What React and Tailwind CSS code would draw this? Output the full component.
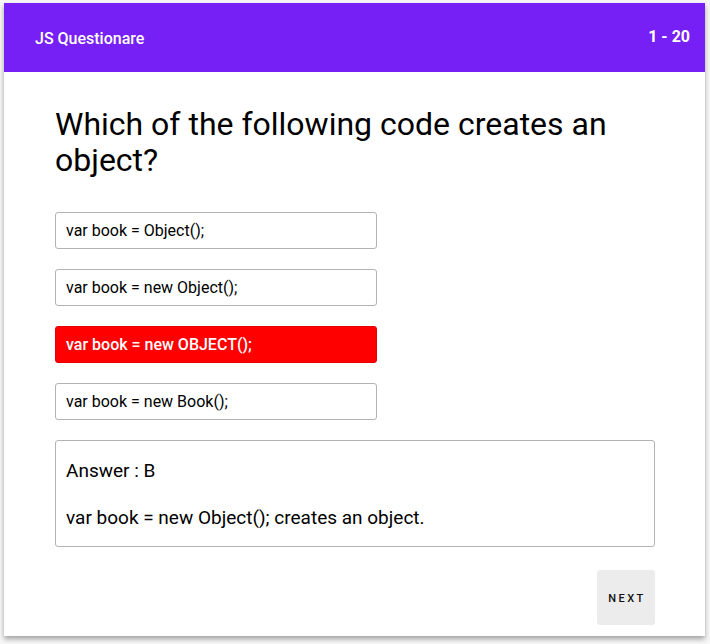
export default function App() {
  const options = [
    { text: "var book = Object();", wrong: false },
    { text: "var book = new Object();", wrong: false },
    { text: "var book = new OBJECT();", wrong: true },
    { text: "var book = new Book();", wrong: false },
  ];
  return (
    <div className="min-h-[644px] bg-[#f7f7f7] pt-[3px] px-[4px] font-['Roboto',sans-serif]">
      <div className="w-[701px] bg-white shadow-[0_3px_5px_rgba(0,0,0,0.35)] pb-[11px]">
        <div className="h-[69px] bg-[#7620f6] flex items-center justify-between pl-[31px] pr-[15px] text-white">
          <span className="text-[16px] font-medium mt-[2px]">JS Questionare</span>
          <span className="text-[16px] font-bold mb-[2px]">1 - 20</span>
        </div>
        <div className="pl-[51px] pr-[50px]">
          <h1 className="mt-[34px] text-[32px] leading-[36px] text-black font-normal">
            Which of the following code creates an object?
          </h1>
          <div className="mt-[34px] flex flex-col gap-[20px]">
            {options.map((o, i) => (
              <div
                key={i}
                className={
                  o.wrong
                    ? "w-[322px] h-[37px] flex items-center px-[10px] rounded-[3px] border border-[#e60000] bg-[#ff0000] text-white text-[16px] font-medium"
                    : "w-[322px] h-[37px] flex items-center px-[10px] rounded-[3px] border border-[#b3b3b3] bg-white text-black text-[16px]"
                }
              >
                {o.text}
              </div>
            ))}
          </div>
          <div className="mt-[20px] h-[107px] w-[600px] border border-[#b3b3b3] rounded-[3px] px-[10px] pt-[18px] text-[19px] text-black leading-[24px]">
            <p>Answer : B</p>
            <p className="mt-[23px]">var book = new Object(); creates an object.</p>
          </div>
          <div className="w-[600px] flex justify-end mt-[23px]">
            <button className="w-[58px] h-[55px] bg-[#ececec] rounded-[3px] text-[11px] font-medium tracking-[0.22em] text-[#111] pl-[2px] pt-[3px]">
              NEXT
            </button>
          </div>
        </div>
      </div>
    </div>
  );
}
